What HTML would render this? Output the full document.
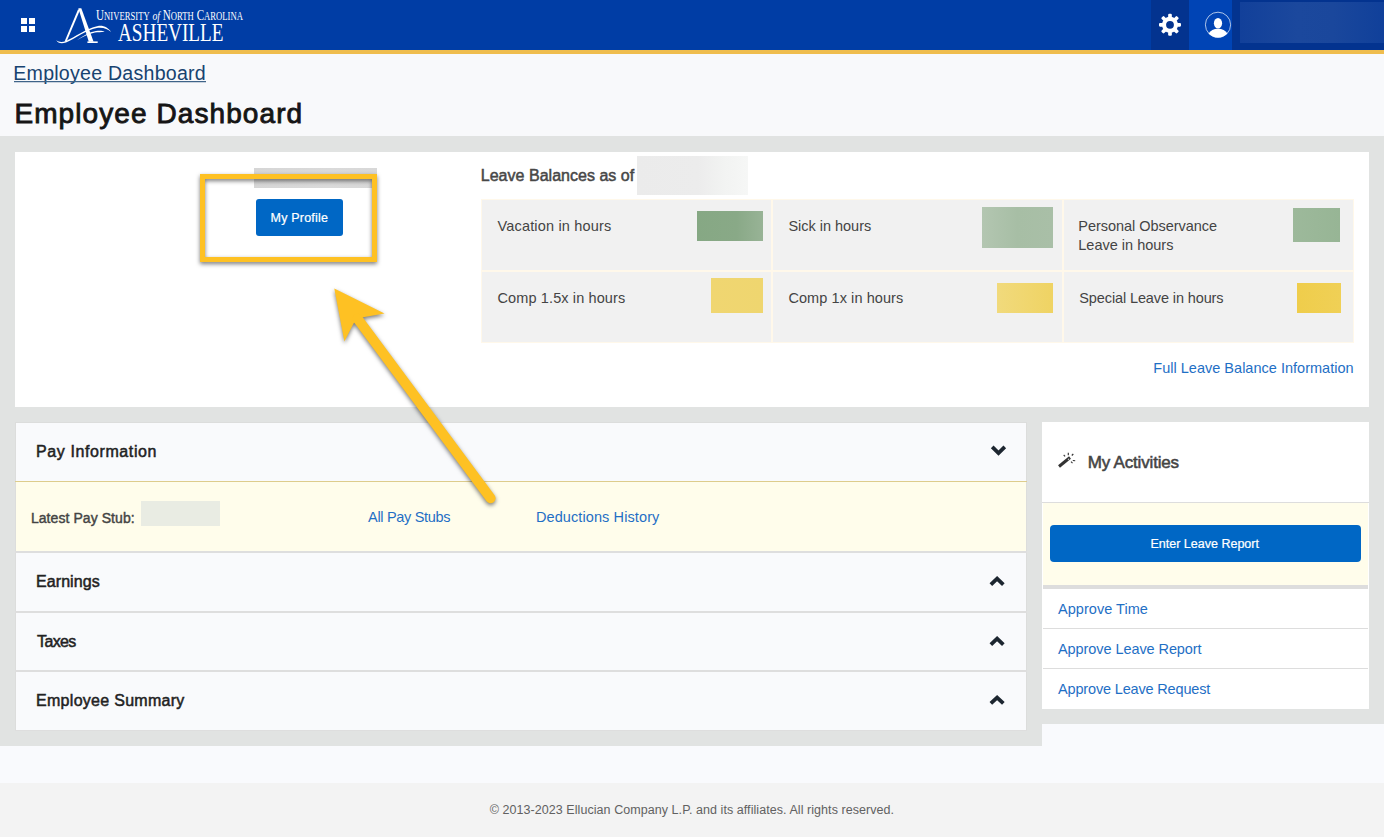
<!DOCTYPE html>
<html><head><meta charset="utf-8"><style>
html,body{margin:0;padding:0;}
body{width:1384px;height:837px;position:relative;overflow:hidden;background:#f8f9fb;font-family:"Liberation Sans", sans-serif;}
body>div{position:absolute;}
.t{white-space:nowrap;}
</style></head><body>
<div style="left:0px;top:54px;width:1384px;height:82px;background:#f8f9fb;"></div>
<div style="left:0px;top:136px;width:1384px;height:588px;background:#e1e3e2;"></div>
<div style="left:0px;top:724px;width:1042px;height:22px;background:#e1e3e2;"></div>
<div style="left:1042px;top:724px;width:342px;height:59px;background:#f9fafd;"></div>
<div style="left:0px;top:746px;width:1042px;height:37px;background:#f9fafd;"></div>
<div style="left:0px;top:783px;width:1384px;height:54px;background:#f3f3f3;"></div>
<div style="left:0px;top:0px;width:1384px;height:50px;background:#003da5;"></div>
<div style="left:0px;top:50px;width:1384px;height:4px;background:#efbd4e;"></div>
<div style="left:21px;top:18px;width:6px;height:6px;background:#ffffff;"></div>
<div style="left:29px;top:18px;width:6px;height:6px;background:#ffffff;"></div>
<div style="left:21px;top:26px;width:6px;height:6px;background:#ffffff;"></div>
<div style="left:29px;top:26px;width:6px;height:6px;background:#ffffff;"></div>
<div style="left:1151px;top:0px;width:38px;height:50px;background:#03338f;"></div>
<div style="left:1189px;top:0px;width:43px;height:50px;background:#0044b5;"></div>
<div style="left:1232px;top:0px;width:152px;height:50px;background:#03338f;"></div>
<div style="left:1240px;top:2px;width:144px;height:41px;background:linear-gradient(90deg,#12409a 0%,#1b489d 40%,#1a479c 65%,#10409a 100%);"></div>

<svg style="position:absolute;left:0;top:0" width="1384" height="54" viewBox="0 0 1384 54">
 <g fill="#fff">
  <!-- gear -->
  <g transform="translate(1170,24.8)">
   <circle r="8"/>
   <rect x="-1.85" y="-11" width="3.7" height="5" rx="1.1" transform="rotate(0)"/>
   <rect x="-1.85" y="-11" width="3.7" height="5" rx="1.1" transform="rotate(45)"/>
   <rect x="-1.85" y="-11" width="3.7" height="5" rx="1.1" transform="rotate(90)"/>
   <rect x="-1.85" y="-11" width="3.7" height="5" rx="1.1" transform="rotate(135)"/>
   <rect x="-1.85" y="-11" width="3.7" height="5" rx="1.1" transform="rotate(180)"/>
   <rect x="-1.85" y="-11" width="3.7" height="5" rx="1.1" transform="rotate(225)"/>
   <rect x="-1.85" y="-11" width="3.7" height="5" rx="1.1" transform="rotate(270)"/>
   <rect x="-1.85" y="-11" width="3.7" height="5" rx="1.1" transform="rotate(315)"/>
   <circle r="3.9" fill="#03338f"/>
  </g>
  <!-- user -->
  <circle cx="1218" cy="24.8" r="12.6" fill="none" stroke="#fff" stroke-opacity="0.85" stroke-width="0.8"/>
  <ellipse cx="1218" cy="23.2" rx="4.1" ry="5.2"/>
  <path d="M1208.6,33.4 Q1211.5,29 1218,28.8 Q1224.5,29 1227.4,33.4 Q1223.5,37.5 1218,37.6 Q1212.5,37.5 1208.6,33.4 z"/>
 </g>
</svg>
<div class="t" style="left:13.30px;top:61.80px;font-size:19.6px;line-height:22px;font-weight:400;color:#174370;letter-spacing:0.234px;">Employee Dashboard</div>
<div style="left:14px;top:81px;width:192px;height:1px;background:#3f6489;"></div>
<div style="left:14px;top:82px;width:192px;height:1px;background:rgba(63,100,137,0.25);"></div>
<div class="t" style="left:14.44px;top:98.00px;font-size:28px;line-height:31px;font-weight:400;color:#151515;letter-spacing:1.084px;-webkit-text-stroke:0.87px #151515;">Employee Dashboard</div>
<div style="left:15px;top:152px;width:1354px;height:255px;background:#ffffff;"></div>
<div style="left:254px;top:168px;width:123px;height:20px;background:linear-gradient(90deg,#d6d6d6,#dadada 60%,#d8d8d8);"></div>
<div style="left:256px;top:199px;width:87px;height:37px;background:#0067c5;border-radius:3px;"></div>
<div class="t" style="left:270.61px;top:210.70px;font-size:12.5px;line-height:14px;font-weight:400;color:#ffffff;letter-spacing:0.185px;-webkit-text-stroke:0.22px #ffffff;">My Profile</div>
<div class="t" style="left:480.75px;top:167.00px;font-size:16px;line-height:17px;font-weight:400;color:#474747;letter-spacing:0.024px;-webkit-text-stroke:0.5px #474747;">Leave Balances as of</div>
<div style="left:637px;top:156px;width:111px;height:39px;background:linear-gradient(90deg,#ebebeb 0%,#ececec 55%,#f2f3f2 78%,#f6f7f6 100%);"></div>
<div style="left:481px;top:199px;width:873px;height:144px;background:#fff8ea;"></div>
<div style="left:482px;top:200px;width:289px;height:70px;background:#f1f1f1;"></div>
<div style="left:482px;top:272px;width:289px;height:70px;background:#f1f1f1;"></div>
<div style="left:773px;top:200px;width:289px;height:70px;background:#f1f1f1;"></div>
<div style="left:773px;top:272px;width:289px;height:70px;background:#f1f1f1;"></div>
<div style="left:1064px;top:200px;width:289px;height:70px;background:#f1f1f1;"></div>
<div style="left:1064px;top:272px;width:289px;height:70px;background:#f1f1f1;"></div>
<div class="t" style="left:497.50px;top:217.80px;font-size:14.5px;line-height:16px;font-weight:400;color:#444444;letter-spacing:0.174px;">Vacation in hours</div>
<div class="t" style="left:788.40px;top:217.80px;font-size:14.5px;line-height:16px;font-weight:400;color:#444444;letter-spacing:-0.013px;">Sick in hours</div>
<div class="t" style="left:1078.30px;top:218.10px;font-size:14.5px;line-height:16px;font-weight:400;color:#444444;letter-spacing:-0.037px;">Personal Observance</div>
<div class="t" style="left:1078.30px;top:236.90px;font-size:14.5px;line-height:16px;font-weight:400;color:#444444;letter-spacing:0.000px;">Leave in hours</div>
<div class="t" style="left:497.50px;top:289.70px;font-size:14.5px;line-height:16px;font-weight:400;color:#444444;letter-spacing:0.119px;">Comp 1.5x in hours</div>
<div class="t" style="left:788.40px;top:289.70px;font-size:14.5px;line-height:16px;font-weight:400;color:#444444;letter-spacing:0.081px;">Comp 1x in hours</div>
<div class="t" style="left:1079.30px;top:290.20px;font-size:14.5px;line-height:16px;font-weight:400;color:#444444;letter-spacing:-0.117px;">Special Leave in hours</div>
<div style="left:697px;top:211px;width:66px;height:30px;background:linear-gradient(90deg,#86a884,#89a987 60%,#98b396);"></div>
<div style="left:982px;top:207px;width:71px;height:41px;background:linear-gradient(90deg,#b3c6b1,#a7bea5 50%,#a9bfa7);"></div>
<div style="left:1293px;top:208px;width:47px;height:34px;background:linear-gradient(90deg,#9db99b,#97b595);"></div>
<div style="left:711px;top:278px;width:52px;height:35px;background:linear-gradient(90deg,#f0d671,#efd66f);"></div>
<div style="left:997px;top:283px;width:56px;height:30px;background:linear-gradient(90deg,#f1da7c,#efd363);"></div>
<div style="left:1297px;top:283px;width:44px;height:30px;background:linear-gradient(90deg,#efcd4b,#f0d056);"></div>
<div class="t" style="left:1153.30px;top:359.90px;font-size:14.5px;line-height:16px;font-weight:400;color:#1f6fc5;letter-spacing:0.013px;">Full Leave Balance Information</div>
<div style="left:15px;top:422px;width:1012px;height:59px;background:#dcdddc;"></div>
<div style="left:16px;top:423px;width:1010px;height:58px;background:#f9fafc;"></div>
<div style="left:15px;top:481px;width:1012px;height:1px;background:#ddcc8c;"></div>
<div style="left:15px;top:482px;width:1012px;height:69px;background:#dcdddc;"></div>
<div style="left:16px;top:482px;width:1010px;height:69px;background:#fffdeb;"></div>
<div style="left:15px;top:551px;width:1012px;height:2px;background:#dedede;"></div>
<div style="left:15px;top:553px;width:1012px;height:58px;background:#dcdddc;"></div>
<div style="left:16px;top:553px;width:1010px;height:58px;background:#f9fafc;"></div>
<div style="left:15px;top:611px;width:1012px;height:2px;background:#dedede;"></div>
<div style="left:15px;top:613px;width:1012px;height:57px;background:#dcdddc;"></div>
<div style="left:16px;top:613px;width:1010px;height:57px;background:#f9fafc;"></div>
<div style="left:15px;top:670px;width:1012px;height:2px;background:#dedede;"></div>
<div style="left:15px;top:672px;width:1012px;height:58px;background:#dcdddc;"></div>
<div style="left:16px;top:672px;width:1010px;height:58px;background:#f9fafc;"></div>
<div style="left:15px;top:730px;width:1012px;height:1px;background:#dedede;"></div>
<div class="t" style="left:36.05px;top:442.80px;font-size:16px;line-height:17px;font-weight:400;color:#222222;letter-spacing:0.596px;-webkit-text-stroke:0.5px #222222;">Pay Information</div>
<div class="t" style="left:30.91px;top:509.50px;font-size:14px;line-height:16px;font-weight:400;color:#444444;letter-spacing:0.069px;-webkit-text-stroke:0.43px #444444;">Latest Pay Stub:</div>
<div style="left:141px;top:501px;width:79px;height:25px;background:#e9ece3;"></div>
<div class="t" style="left:368.10px;top:509.30px;font-size:14.5px;line-height:16px;font-weight:400;color:#1f6fc5;letter-spacing:-0.324px;">All Pay Stubs</div>
<div class="t" style="left:535.90px;top:509.30px;font-size:14.5px;line-height:16px;font-weight:400;color:#1f6fc5;letter-spacing:0.104px;">Deductions History</div>
<div class="t" style="left:36.05px;top:573.30px;font-size:16px;line-height:17px;font-weight:400;color:#222222;letter-spacing:0.065px;-webkit-text-stroke:0.5px #222222;">Earnings</div>
<div class="t" style="left:37.05px;top:633.00px;font-size:16px;line-height:17px;font-weight:400;color:#222222;letter-spacing:-0.624px;-webkit-text-stroke:0.5px #222222;">Taxes</div>
<div class="t" style="left:36.05px;top:692.20px;font-size:16px;line-height:17px;font-weight:400;color:#222222;letter-spacing:0.284px;-webkit-text-stroke:0.5px #222222;">Employee Summary</div>
<div style="left:1042px;top:422px;width:327px;height:287px;background:#ffffff;"></div>
<div style="left:1042px;top:502px;width:327px;height:1px;background:#dddddd;"></div>
<div style="left:1043px;top:503px;width:325px;height:82px;background:#fffdeb;"></div>
<div style="left:1043px;top:585px;width:325px;height:4px;background:#dddddd;"></div>
<div style="left:1050px;top:525px;width:311px;height:37px;background:#0067c5;border-radius:4px;"></div>
<div class="t" style="left:1087.67px;top:453.40px;font-size:17px;line-height:19px;font-weight:400;color:#444444;letter-spacing:-0.174px;-webkit-text-stroke:0.53px #444444;">My Activities</div>
<div class="t" style="left:1150.41px;top:537.00px;font-size:12.5px;line-height:14px;font-weight:400;color:#ffffff;letter-spacing:0.009px;-webkit-text-stroke:0.22px #ffffff;">Enter Leave Report</div>
<div class="t" style="left:1058.00px;top:601.30px;font-size:14.5px;line-height:16px;font-weight:400;color:#1f6fc5;letter-spacing:0.040px;">Approve Time</div>
<div style="left:1043px;top:628px;width:325px;height:1px;background:#dddddd;"></div>
<div class="t" style="left:1058.00px;top:641.10px;font-size:14.5px;line-height:16px;font-weight:400;color:#1f6fc5;letter-spacing:-0.077px;">Approve Leave Report</div>
<div style="left:1043px;top:668px;width:325px;height:1px;background:#dddddd;"></div>
<div class="t" style="left:1058.00px;top:680.80px;font-size:14.5px;line-height:16px;font-weight:400;color:#1f6fc5;letter-spacing:-0.162px;">Approve Leave Request</div>
<div class="t" style="left:489.70px;top:802.90px;font-size:12.5px;line-height:14px;font-weight:400;color:#616161;letter-spacing:0.061px;">© 2013-2023 Ellucian Company L.P. and its affiliates. All rights reserved.</div>

<svg style="position:absolute;left:0;top:0" width="1384" height="837" viewBox="0 0 1384 837">
 <g fill="none" stroke="#1d2630" stroke-width="3.8" stroke-linecap="butt" stroke-linejoin="miter">
  <polyline points="992.2,446.95 998.5,453.1 1004.8,446.95"/>
  <polyline points="990.85,584.65 997.1,578.7 1003.35,584.65"/>
  <polyline points="990.85,644.55 997.1,638.6 1003.35,644.55"/>
  <polyline points="990.85,703.45 997.1,697.5 1003.35,703.45"/>
 </g>
 <!-- wand -->
 <g fill="#333">
  <path d="M1058.05,465.34 L1069.05,456.34 L1070.95,458.66 L1059.95,467.66 Z"/>
  <path d="M1067.6,459.4 L1068.8,458.4 L1069.4,459.1 L1068.2,460.1 Z" fill="#fff"/>
 </g>
 <g stroke="#333" stroke-width="1.15" fill="none">
  <line x1="1068.3" y1="452.8" x2="1068.3" y2="455.2"/>
  <line x1="1063.7" y1="455" x2="1065.1" y2="456.3"/>
  <line x1="1073.3" y1="454" x2="1071.8" y2="455.5"/>
  <line x1="1072.8" y1="460.5" x2="1075.2" y2="460.7"/>
  <line x1="1071" y1="461.7" x2="1072.5" y2="463.1"/>
 </g>
</svg>

<svg style="position:absolute;left:0;top:0" width="260" height="50" viewBox="0 0 260 50">
 <g fill="#fff">
  <text x="96" y="20.2" font-family="Liberation Serif" font-size="15.4" textLength="147" lengthAdjust="spacingAndGlyphs">U<tspan font-size="12">NIVERSITY</tspan> <tspan font-style="italic" font-size="13.5">of</tspan> N<tspan font-size="12">ORTH</tspan> C<tspan font-size="12">AROLINA</tspan></text>
  <text x="118" y="40.5" font-family="Liberation Serif" font-size="25.5" textLength="105.5" lengthAdjust="spacingAndGlyphs">ASHEVILLE</text>
  <path d="M78,9.6 L80.2,9.6 L66.6,41.6 L64.6,41.6 Z"/>
  <path d="M78.3,8.2 L81.3,8.2 L93.6,41.8 L88.8,41.8 Z"/>
  <path d="M87.4,41.4 L97.7,41.4 L97.7,43 L87.4,43 Z"/>
  <path d="M56.2,40.3 C59,42.2 62,42.4 66,41 C75,37 85,29 98,26 C104,25.2 108.5,28 111,32 C108,29.4 104,27.3 98,27.8 C86,29.8 76,38.3 66,42.6 C61,44 58,43.2 56.2,40.3 Z"/>
  <path d="M76.7,40.2 C83,36 89,32.2 96,31 C100,30.5 103,30.9 104.6,31.7 C101,32.1 98,32.1 95,32.6 C89,33.6 83,37 76.7,40.2 Z"/>
 </g>
</svg>

<svg style="position:absolute;left:0;top:0;filter:drop-shadow(0px 2px 2.3px rgba(0,0,0,0.52))" width="1384" height="837" viewBox="0 0 1384 837">
 <rect x="202.5" y="176.5" width="172" height="83" fill="none" stroke="#fec123" stroke-width="5"/>
 <g fill="#fec123">
  <path d="M334.3,288.6 L384.5,313.6 L363,317.3 L353.8,323 L344.4,341.6 Z"/>
 </g>
 <line x1="357.6" y1="318.8" x2="490.6" y2="498.3" stroke="#fec123" stroke-width="10" stroke-linecap="round"/>
</svg>
</body></html>
